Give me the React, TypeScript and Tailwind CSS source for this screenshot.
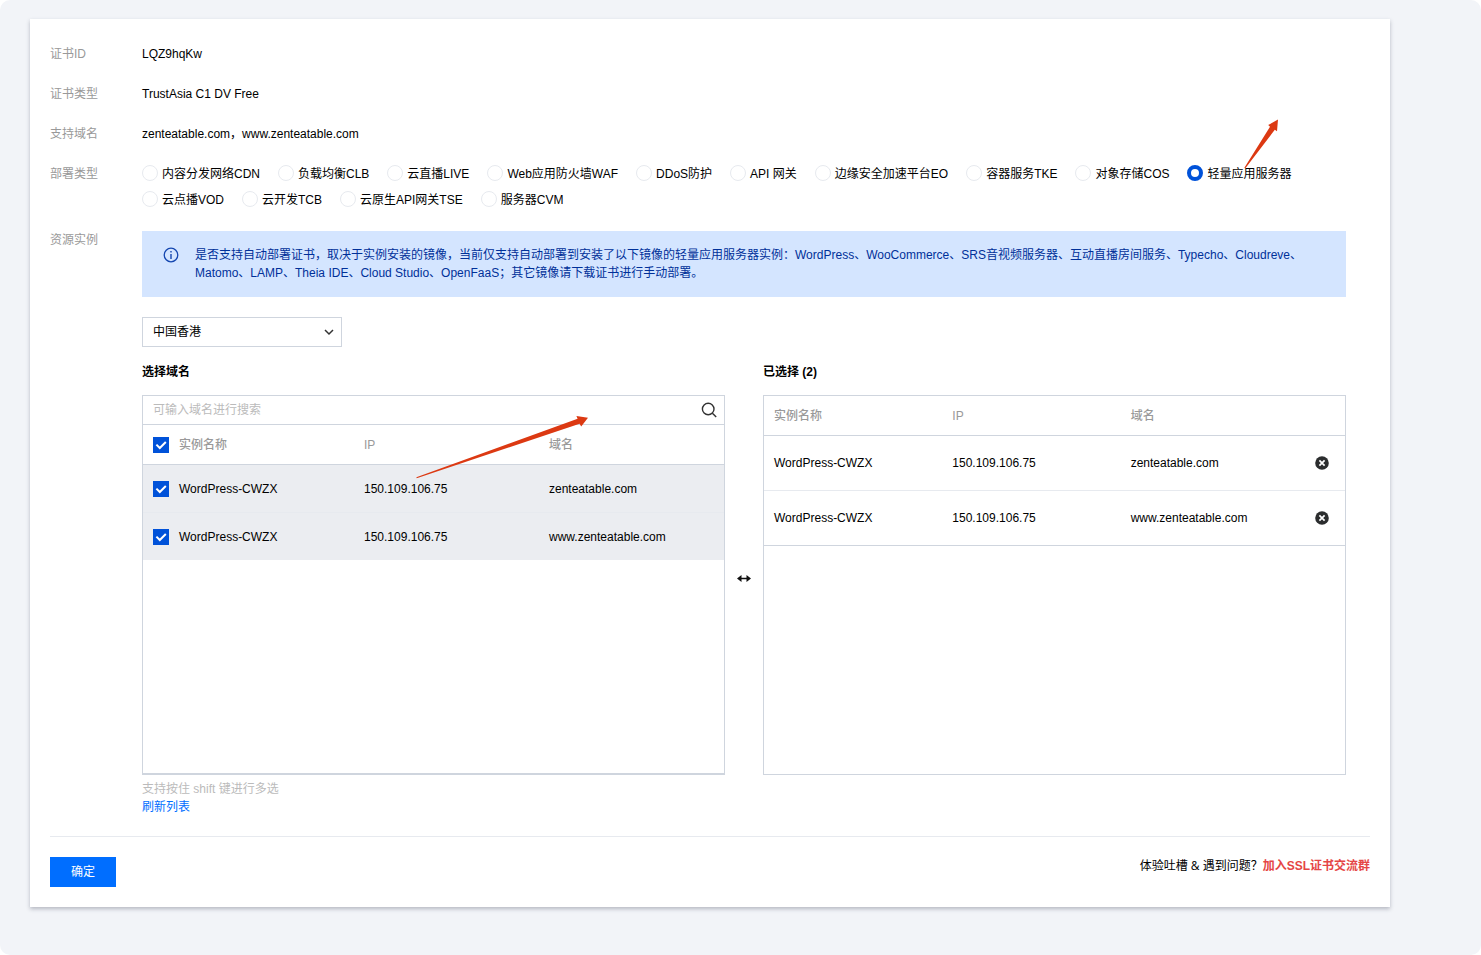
import React, { useState } from 'react';

const DEPLOY_TYPES = [
  '内容分发网络CDN',
  '负载均衡CLB',
  '云直播LIVE',
  'Web应用防火墙WAF',
  'DDoS防护',
  'API 网关',
  '边缘安全加速平台EO',
  '容器服务TKE',
  '对象存储COS',
  '轻量应用服务器',
  '云点播VOD',
  '云开发TCB',
  '云原生API网关TSE',
  '服务器CVM',
];

const INSTANCES = [
  { name: 'WordPress-CWZX', ip: '150.109.106.75', domain: 'zenteatable.com' },
  { name: 'WordPress-CWZX', ip: '150.109.106.75', domain: 'www.zenteatable.com' },
];

function FormRow({ label, children }: { label: string; children: React.ReactNode }) {
  return (
    <div className="flex">
      <div className="w-[92px] shrink-0 text-[#999999]">{label}</div>
      <div className="min-w-0 flex-1">{children}</div>
    </div>
  );
}

function Checkbox({ label, checked, onChange }: { label: string; checked: boolean; onChange: () => void }) {
  return (
    <span className="grid h-4 w-4">
      <input
        type="checkbox"
        aria-label={label}
        checked={checked}
        onChange={onChange}
        className="col-start-1 row-start-1 h-4 w-4 appearance-none border border-[#cfd5de] bg-white checked:border-[#0052d9] checked:bg-[#0052d9]"
      />
      {checked && (
        <svg viewBox="0 0 16 16" className="pointer-events-none col-start-1 row-start-1 h-4 w-4" fill="none" stroke="#fff" strokeWidth="2">
          <path d="M3.4 7.6 6.8 11l6-6" />
        </svg>
      )}
    </span>
  );
}

export default function App() {
  const [deployType, setDeployType] = useState('轻量应用服务器');
  const [region, setRegion] = useState('hk');
  const [keyword, setKeyword] = useState('');
  const [selected, setSelected] = useState<string[]>(INSTANCES.map(i => i.domain));

  const allSelected = selected.length === INSTANCES.length;

  const toggle = (domain: string) => {
    setSelected(prev => (prev.includes(domain) ? prev.filter(d => d !== domain) : [...prev, domain]));
  };

  const visible = INSTANCES.filter(i => i.domain.includes(keyword));
  const chosen = INSTANCES.filter(i => selected.includes(i.domain));

  return (
    <div className="min-h-screen rounded-[10px] bg-[#f2f4f8] pt-[19px] pr-[91px] pb-12 pl-[30px] font-['Liberation_Sans','Noto_Sans_CJK_SC',sans-serif] text-xs leading-[18px] text-black">
      <main className="bg-white px-5 pt-[26px] pb-5 shadow-[0_2px_4px_rgba(54,58,80,0.32)]">
        <div className="flex flex-col gap-[22px] pr-6">
          <FormRow label="证书ID">LQZ9hqKw</FormRow>
          <FormRow label="证书类型">TrustAsia C1 DV Free</FormRow>
          <FormRow label="支持域名">zenteatable.com，www.zenteatable.com</FormRow>

          <FormRow label="部署类型">
            <div className="flex flex-wrap gap-x-[18px] gap-y-2">
              {DEPLOY_TYPES.map(type => (
                <label key={type} className="relative flex items-start gap-1">
                  <input
                    type="radio"
                    name="deploy-type"
                    checked={deployType === type}
                    onChange={() => setDeployType(type)}
                    className="h-4 w-4 appearance-none rounded-full border border-[#e7eaef] bg-white checked:border-4 checked:border-[#0052d9]"
                  />
                  {type}
                  {/* Red pointer above the lightweight server option */}
                  {type === '轻量应用服务器' && (
                    <svg className="pointer-events-none absolute bottom-3 left-[57px] h-[52px] w-[36px]" viewBox="0 0 36 52" fill="#dc3912">
                      <path d="M34 .5 24.2 6.1 26 7.8 .4 48.8 1.2 49.6 30.8 10.8 33 12.3Z" />
                    </svg>
                  )}
                </label>
              ))}
            </div>
          </FormRow>

          <FormRow label="资源实例">
            <div className="flex gap-4 bg-[#d4e5ff] py-[15px] pr-10 pl-[21px] text-[#003099]">
              <svg className="mt-px h-4 w-4 shrink-0" viewBox="0 0 16 16" fill="none" stroke="#1446b0">
                <circle cx="8" cy="8" r="6.8" strokeWidth="1.3" />
                <path d="M8 7v5M8 4v1.6" strokeWidth="1.4" />
              </svg>
              <p>
                是否支持自动部署证书，取决于实例安装的镜像，当前仅支持自动部署到安装了以下镜像的轻量应用服务器实例：WordPress、WooCommerce、SRS音视频服务器、互动直播房间服务、Typecho、Cloudreve、Matomo、LAMP、Theia IDE、Cloud Studio、OpenFaaS；其它镜像请下载证书进行手动部署。
              </p>
            </div>

            <div className="mt-5 grid h-[30px] w-[200px] items-center">
              <select
                aria-label="地域"
                value={region}
                onChange={e => setRegion(e.target.value)}
                className="col-start-1 row-start-1 h-[30px] w-full appearance-none border border-[#cfd5de] bg-white px-[10px]"
              >
                <option value="hk">中国香港</option>
              </select>
              <svg className="pointer-events-none col-start-1 row-start-1 mr-2 h-[10px] w-[10px] justify-self-end" viewBox="0 0 10 10" fill="none" stroke="#333" strokeWidth="1.5">
                <path d="M1 3l4 4 4-4" />
              </svg>
            </div>

            <div className="mt-3 flex items-start">
              <section className="relative min-w-0 flex-1 pt-1">
                <h3 className="font-bold">选择域名</h3>
                <div className="mt-[14px] h-[380px] border border-b-2 border-[#cfd5de]">
                  <div className="flex h-[29px] items-center border-b border-[#cfd5de] pr-[7px] pl-[10px]">
                    <input
                      aria-label="搜索域名"
                      placeholder="可输入域名进行搜索"
                      value={keyword}
                      onChange={e => setKeyword(e.target.value)}
                      className="min-w-0 flex-1 outline-none placeholder:text-[#bbbbbb]"
                    />
                    <button type="button" aria-label="搜索">
                      <svg className="h-4 w-4" viewBox="0 0 16 16" fill="none" stroke="#333" strokeWidth="1.4">
                        <circle cx="7.2" cy="7" r="5.8" />
                        <path d="m11.4 11.2 3.8 3.8" />
                      </svg>
                    </button>
                  </div>
                  <table className="w-full table-fixed border-separate border-spacing-0 text-left">
                    <thead>
                      <tr className="h-10 text-[#999999]">
                        <th className="w-[26px] border-b border-[#cfd5de] pl-[10px]">
                          <Checkbox
                            label="全选"
                            checked={allSelected}
                            onChange={() => setSelected(allSelected ? [] : INSTANCES.map(i => i.domain))}
                          />
                        </th>
                        <th className="border-b border-[#cfd5de] px-[10px] font-medium">实例名称</th>
                        <th className="border-b border-[#cfd5de] px-[10px] font-medium">IP</th>
                        <th className="border-b border-[#cfd5de] px-[10px] font-medium">域名</th>
                      </tr>
                    </thead>
                    <tbody className="[&>tr:first-child>td]:border-b">
                      {visible.map(item => (
                        <tr key={item.domain} className="h-12 bg-[#ebedf1] last:h-[47px]">
                          <td className="border-[#e7eaef] pl-[10px]">
                            <Checkbox label={item.domain} checked={selected.includes(item.domain)} onChange={() => toggle(item.domain)} />
                          </td>
                          <td className="border-[#e7eaef] px-[10px]">{item.name}</td>
                          <td className="border-[#e7eaef] px-[10px]">{item.ip}</td>
                          <td className="border-[#e7eaef] px-[10px]">{item.domain}</td>
                        </tr>
                      ))}
                    </tbody>
                  </table>
                </div>
                <p className="mt-[5px] text-[#bbbbbb]">支持按住 shift 键进行多选</p>

                {/* Red pointer across the table header */}
                <svg className="pointer-events-none absolute top-[54px] left-[272px] h-[68px] w-[176px]" viewBox="0 0 176 68" fill="#dc3912">
                  <path d="M174 4.8 162.4 3 163.6 5.8 2.4 64.3 2.7 65.2 165.6 10.8 167.2 13.4Z" />
                </svg>
              </section>

              <div className="flex w-[38px] shrink-0 justify-center self-center">
                <svg className="h-4 w-4" viewBox="0 0 16 16" fill="#111">
                  <path d="M1 7.5 5.5 4v2.7h5V4L15 7.5 10.5 11V8.3h-5V11z" />
                </svg>
              </div>

              <section className="min-w-0 flex-1 pt-1">
                <h3 className="font-bold">已选择 ({chosen.length})</h3>
                <div className="mt-[14px] h-[380px] border border-[#cfd5de]">
                  <table className="w-full table-fixed border-separate border-spacing-0 text-left">
                    <thead>
                      <tr className="h-10 text-[#999999]">
                        <th className="border-b border-[#cfd5de] px-[10px] font-medium">实例名称</th>
                        <th className="border-b border-[#cfd5de] px-[10px] font-medium">IP</th>
                        <th className="border-b border-[#cfd5de] px-[10px] font-medium">域名</th>
                        <th className="w-[46px] border-b border-[#cfd5de]" />
                      </tr>
                    </thead>
                    <tbody className="[&>tr:last-child>td]:border-[#cfd5de]">
                      {chosen.map(item => (
                        <tr key={item.domain} className="h-[55px]">
                          <td className="border-b border-[#e7eaef] px-[10px]">{item.name}</td>
                          <td className="border-b border-[#e7eaef] px-[10px]">{item.ip}</td>
                          <td className="border-b border-[#e7eaef] px-[10px]">{item.domain}</td>
                          <td className="border-b border-[#e7eaef]">
                            <button type="button" aria-label={`移除 ${item.domain}`} className="mx-auto block" onClick={() => toggle(item.domain)}>
                              <svg className="h-[14px] w-[14px]" viewBox="0 0 14 14">
                                <circle cx="7" cy="7" r="6.8" fill="#2b2d2e" />
                                <path d="m4.4 4.4 5.2 5.2m0-5.2L4.4 9.6" stroke="#fff" strokeWidth="1.7" />
                              </svg>
                            </button>
                          </td>
                        </tr>
                      ))}
                    </tbody>
                  </table>
                </div>
              </section>
            </div>
            <a href="#refresh" className="block w-fit text-[#006eff]">刷新列表</a>
          </FormRow>
        </div>

        <footer className="mt-5 flex items-start justify-between border-t border-[#e7eaef] pt-5">
          <button type="button" className="h-[30px] bg-[#006eff] px-[21px] text-white">
            确定
          </button>
          <p className="font-['Open_Sans','Noto_Sans_CJK_SC',sans-serif]">
            体验吐槽 &amp; 遇到问题？
            <a href="#group" className="font-['Liberation_Sans','Noto_Sans_CJK_SC',sans-serif] font-bold text-[#e54545]">加入SSL证书交流群</a>
          </p>
        </footer>
      </main>
    </div>
  );
}
